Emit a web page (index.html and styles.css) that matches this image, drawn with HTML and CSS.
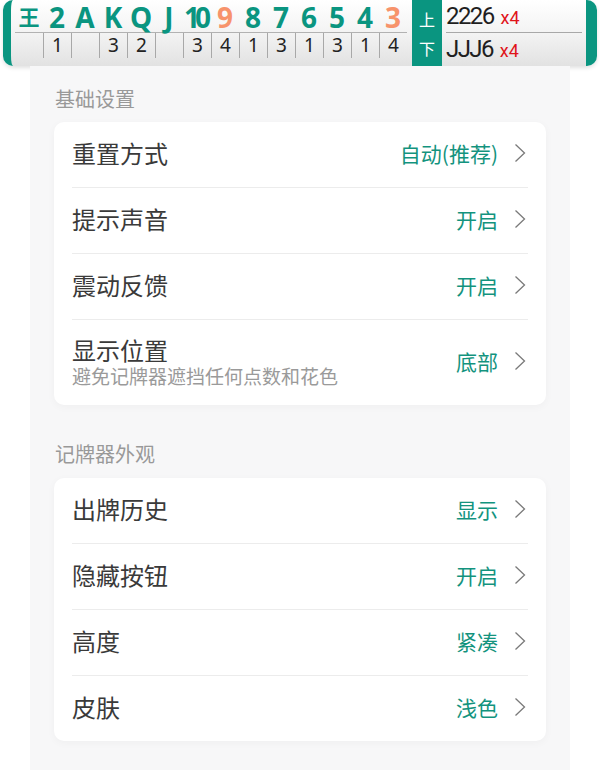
FILE: index.html
```html
<!DOCTYPE html>
<html lang="zh">
<head>
<meta charset="utf-8">
<title>记牌器设置</title>
<link rel="stylesheet" href="styles.css">
</head>
<body>
<div class="bar">
  <div class="ranks">
    <div class="rk"><div class="face joker">王</div><div class="cnt"></div></div>
    <div class="rk"><div class="face">2</div><div class="cnt">1</div></div>
    <div class="rk"><div class="face">A</div><div class="cnt"></div></div>
    <div class="rk"><div class="face">K</div><div class="cnt">3</div></div>
    <div class="rk"><div class="face">Q</div><div class="cnt">2</div></div>
    <div class="rk"><div class="face">J</div><div class="cnt"></div></div>
    <div class="rk"><div class="face ten">10</div><div class="cnt">3</div></div>
    <div class="rk"><div class="face hot">9</div><div class="cnt">4</div></div>
    <div class="rk"><div class="face">8</div><div class="cnt">1</div></div>
    <div class="rk"><div class="face">7</div><div class="cnt">3</div></div>
    <div class="rk"><div class="face">6</div><div class="cnt">1</div></div>
    <div class="rk"><div class="face">5</div><div class="cnt">3</div></div>
    <div class="rk"><div class="face">4</div><div class="cnt">1</div></div>
    <div class="rk"><div class="face hot">3</div><div class="cnt">4</div></div>
  </div>
  <div class="toggle"><span>上</span><span>下</span></div>
  <div class="recent">
    <div class="play">2226<span class="times">x4</span></div>
    <div class="play">JJJ6<span class="times">x4</span></div>
  </div>
</div>

<div class="panel">
  <div class="sec-title">基础设置</div>
  <div class="card">
    <div class="row">
      <div class="label">重置方式</div>
      <div class="value">自动(推荐)</div>
      <svg class="chev" viewBox="0 0 12 20"><polyline points="1.5,1.5 10.5,10 1.5,18.5"/></svg>
    </div>
    <div class="row">
      <div class="label">提示声音</div>
      <div class="value">开启</div>
      <svg class="chev" viewBox="0 0 12 20"><polyline points="1.5,1.5 10.5,10 1.5,18.5"/></svg>
    </div>
    <div class="row">
      <div class="label">震动反馈</div>
      <div class="value">开启</div>
      <svg class="chev" viewBox="0 0 12 20"><polyline points="1.5,1.5 10.5,10 1.5,18.5"/></svg>
    </div>
    <div class="row tall">
      <div class="label">显示位置<div class="sub">避免记牌器遮挡任何点数和花色</div></div>
      <div class="value">底部</div>
      <svg class="chev" viewBox="0 0 12 20"><polyline points="1.5,1.5 10.5,10 1.5,18.5"/></svg>
    </div>
  </div>

  <div class="sec-title second">记牌器外观</div>
  <div class="card">
    <div class="row">
      <div class="label">出牌历史</div>
      <div class="value">显示</div>
      <svg class="chev" viewBox="0 0 12 20"><polyline points="1.5,1.5 10.5,10 1.5,18.5"/></svg>
    </div>
    <div class="row">
      <div class="label">隐藏按钮</div>
      <div class="value">开启</div>
      <svg class="chev" viewBox="0 0 12 20"><polyline points="1.5,1.5 10.5,10 1.5,18.5"/></svg>
    </div>
    <div class="row">
      <div class="label">高度</div>
      <div class="value">紧凑</div>
      <svg class="chev" viewBox="0 0 12 20"><polyline points="1.5,1.5 10.5,10 1.5,18.5"/></svg>
    </div>
    <div class="row">
      <div class="label">皮肤</div>
      <div class="value">浅色</div>
      <svg class="chev" viewBox="0 0 12 20"><polyline points="1.5,1.5 10.5,10 1.5,18.5"/></svg>
    </div>
  </div>
</div>
</body>
</html>
```

FILE: styles.css
```css
html, body {
  margin: 0;
  padding: 0;
  background: #ffffff;
}
body {
  font-family: "Noto Sans", "Noto Sans CJK SC", sans-serif;
  color: #333;
}

/* ---------- card counter bar ---------- */
.bar {
  display: flex;
  height: 66px;
  margin: 0 3px;
  box-sizing: border-box;
  border-left: 8px solid #0a9580;
  border-right: 11px solid #0a9580;
  border-radius: 10px;
  background: linear-gradient(#ffffff 0%, #f3f3f3 50%, #e2e2e2 100%);
  box-shadow: 0 2px 4px rgba(0, 0, 0, 0.12);
  padding-left: 4px;
}
.ranks {
  display: grid;
  grid-template-columns: repeat(14, 28px);
}
.rk {
  display: flex;
  flex-direction: column;
}
.face {
  height: 33px;
  box-sizing: border-box;
  padding-top: 2px;
  border-bottom: 1px solid #b2b2b2;
  text-align: center;
  font-family: "Noto Sans", "Noto Sans CJK SC", sans-serif;
  font-weight: 700;
  font-size: 28px;
  line-height: 30px;
  color: #0a9580;
  white-space: nowrap;
}
.face.joker {
  font-family: "Noto Sans CJK SC", sans-serif;
  font-size: 21px;
  padding-top: 1px;
}
.face.hot {
  color: #f7936b;
}
.face.ten {
  letter-spacing: -5px;
  text-indent: -4px;
}
.cnt {
  height: 25px;
  text-align: center;
  font-family: "Noto Sans", sans-serif;
  font-size: 19px;
  line-height: 25px;
  color: #222;
}
.rk + .rk .cnt {
  border-left: 1px solid #a8a8a8;
}
.toggle {
  width: 30px;
  margin-left: 5px;
  background: #0a9580;
  display: flex;
  flex-direction: column;
  align-items: center;
  justify-content: space-around;
  padding: 4px 0 4px;
  box-sizing: border-box;
  color: #fff;
  font-family: "Noto Sans CJK SC", sans-serif;
  font-size: 16px;
  line-height: 22px;
}
.recent {
  flex: 1;
  padding: 0 4px;
  display: flex;
  flex-direction: column;
}
.play {
  height: 33px;
  box-sizing: border-box;
  font-family: "Roboto", "Noto Sans", sans-serif;
  font-size: 24px;
  letter-spacing: -1.6px;
  line-height: 33px;
  color: #1f1f1f;
  white-space: nowrap;
}
.play:first-child {
  border-bottom: 1px solid #a8a8a8;
}
.times {
  margin-left: 7px;
  font-size: 18px;
  letter-spacing: 0;
  color: #e0141a;
}

/* ---------- settings panel ---------- */
.panel {
  margin: 0 30px;
  background: #f7f7f8;
  padding: 18px 24px 29px;
}
.sec-title {
  font-family: "Noto Sans CJK SC", sans-serif;
  font-size: 20px;
  line-height: 30px;
  color: #999;
  padding-left: 1px;
  margin-bottom: 8px;
}
.sec-title.second {
  margin-top: 34px;
  margin-bottom: 9px;
}
.card {
  background: #fff;
  border-radius: 10px;
  padding: 0 18px;
  box-shadow: 0 2px 8px rgba(0, 0, 0, 0.035);
}
.row {
  display: flex;
  align-items: center;
  height: 62px;
  padding-bottom: 3px;
  border-bottom: 1px solid #ececec;
}
.row:last-child {
  border-bottom: none;
}
.row.tall {
  height: 82px;
}
.label {
  flex: 1;
  font-family: "Noto Sans CJK SC", sans-serif;
  font-size: 24px;
  line-height: 30px;
  color: #3a3a3a;
}
.sub {
  font-size: 19px;
  line-height: 22px;
  color: #9a9a9a;
}
.value {
  font-family: "Noto Sans CJK SC", sans-serif;
  font-size: 21px;
  color: #13937e;
}
.chev {
  width: 12px;
  height: 20px;
  margin-left: 16px;
  margin-right: 2px;
  fill: none;
  stroke: #7a7a7a;
  stroke-width: 1.3;
}
```
